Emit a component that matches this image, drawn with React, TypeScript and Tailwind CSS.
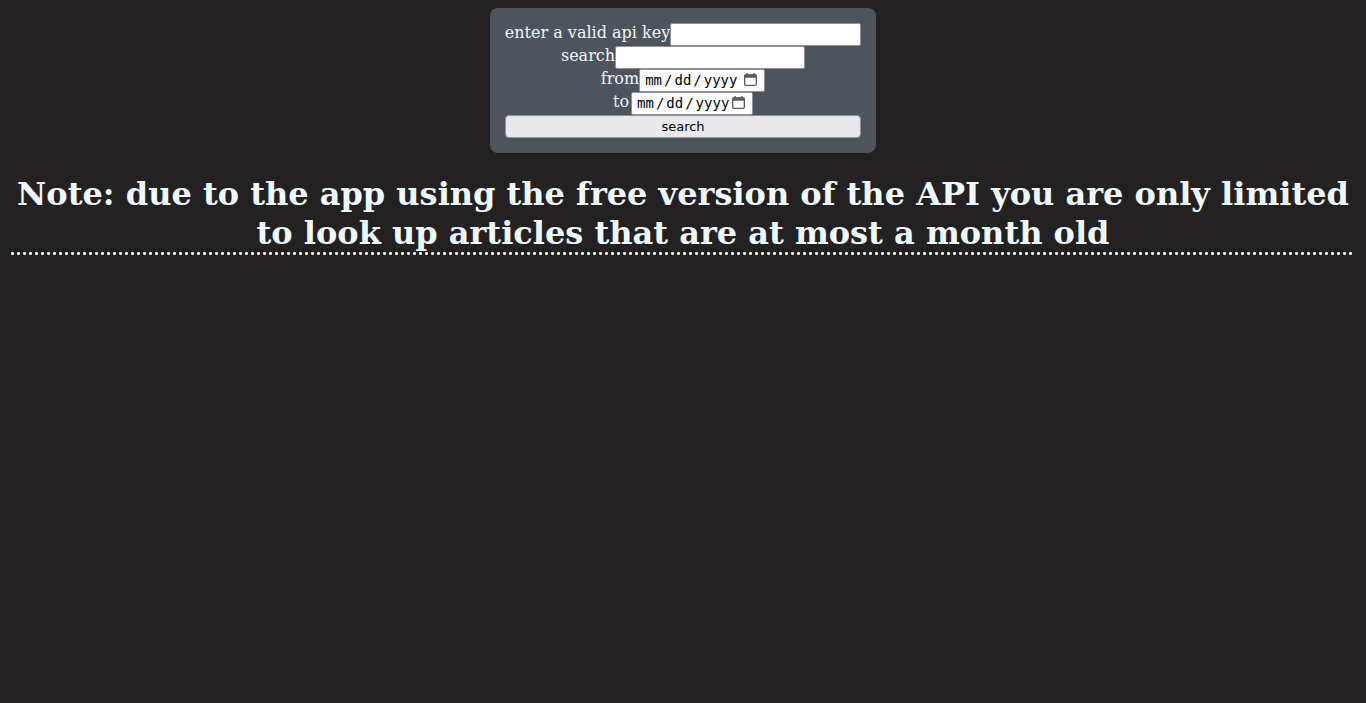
const fieldClass = "h-[23px] rounded-[2px] border border-[#8f8f9d] bg-white text-black";

const textClass = "px-[2px] text-[13px]";

const dateClass =
  "pr-0 pl-1 font-['DejaVu_Sans_Mono',monospace] text-[14px] [&::-webkit-calendar-picker-indicator]:opacity-0 [&::-webkit-datetime-edit-text]:px-px [&::-webkit-calendar-picker-indicator]:ml-0";

function CalendarIcon() {
  return (
    <svg
      viewBox="0 0 13 13"
      aria-hidden="true"
      className="pointer-events-none absolute top-[4px] right-[8px] size-[13px] text-[#5b5b5f]"
    >
      <rect x="0.65" y="2" width="11.7" height="10.3" rx="1.2" fill="none" stroke="currentColor" strokeWidth="1.3" />
      <path d="M0.5 1.6h12v3.1h-12zM2.4 0h1.4v3H2.4zM9.2 0h1.4v3H9.2z" fill="currentColor" />
    </svg>
  );
}

export default function App() {
  return (
    <div className="min-h-screen bg-[#232122] p-2 font-['DejaVu_Serif',serif] text-[aliceblue]">
      <form className="mx-auto flex w-fit flex-col rounded-lg bg-[#4d545b] p-[15px] text-base leading-[19px]">
        <div className="flex justify-center">
          <label htmlFor="key">enter a valid api key</label>
          <input id="key" type="text" className={fieldClass + " w-[191px] " + textClass} />
        </div>
        <div className="flex justify-center">
          <label htmlFor="query">search</label>
          <input id="query" type="text" className={fieldClass + " w-[190px] " + textClass} />
        </div>
        <div className="flex justify-center">
          <label htmlFor="from">from</label>
          <div className="relative flex">
            <input id="from" type="date" className={fieldClass + " w-[126px] " + dateClass} />
            <CalendarIcon />
          </div>
        </div>
        <div className="flex justify-center gap-[2px]">
          <label htmlFor="to">to</label>
          <div className="relative flex">
            <input id="to" type="date" className={fieldClass + " w-[122px] " + dateClass} />
            <CalendarIcon />
          </div>
        </div>
        <button
          type="submit"
          className="h-[23px] rounded-[4px] border border-[#8f8f9d] bg-[#e9e9ed] font-['DejaVu_Sans',sans-serif] text-[13px] text-black"
        >
          search
        </button>
      </form>
      <h1 className="mx-[3px] mt-[22px] bg-[radial-gradient(circle_at_1.5px_1.5px,aliceblue_1.2px,transparent_1.8px)] bg-[length:6px_3px] bg-bottom-left bg-repeat-x pb-[2px] text-center text-[32px] leading-[39px] font-bold">
        Note: due to the app using the free version of the API you are only limited to look up articles that are at most a month old
      </h1>
    </div>
  );
}
